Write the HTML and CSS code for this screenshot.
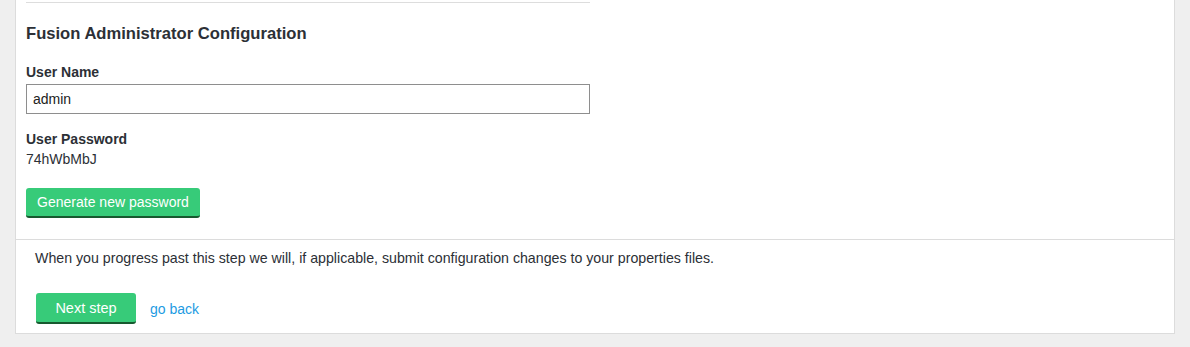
FILE: index.html
```html
<!DOCTYPE html>
<html>
<head>
<meta charset="utf-8">
<link rel="stylesheet" href="styles.css">
</head>
<body>
<div class="panel">
  <div class="section">
    <div class="rule"></div>
    <h3 class="title">Fusion Administrator Configuration</h3>
    <label class="label" for="user">User Name</label>
    <input id="user" class="input" type="text" value="admin">
    <div class="label label-pw">User Password</div>
    <div class="value">74hWbMbJ</div>
    <button class="btn btn-gen">Generate new password</button>
  </div>
  <div class="footer">
    <p class="note">When you progress past this step we will, if applicable, submit configuration changes to your properties files.</p>
    <div class="actions">
      <button class="btn btn-next">Next step</button>
      <a class="back" href="#">go back</a>
    </div>
  </div>
</div>
</body>
</html>
```

FILE: styles.css
```css
html, body {
  margin: 0;
  padding: 0;
  background: #efefef;
  font-family: "Liberation Sans", Arial, sans-serif;
  color: #2c3036;
}
.panel {
  margin-left: 15px;
  width: 1158px;
  background: #fff;
  border: 1px solid #dcdcdc;
  border-top: none;
}
.section {
  padding: 2px 10px 21px 10px;
  display: flex;
  flex-direction: column;
  align-items: flex-start;
}
.rule {
  width: 564px;
  height: 1px;
  background: #dddddd;
}
.title {
  margin: 21px 0 0 0;
  font-size: 16.6px;
  line-height: 20px;
  font-weight: bold;
  color: #2c3036;
}
.label {
  display: block;
  margin-top: 18px;
  font-size: 14px;
  line-height: 20px;
  font-weight: bold;
  color: #2c3036;
}
.label-pw {
  margin-top: 15px;
}
.input {
  margin-top: 2px;
  box-sizing: border-box;
  width: 564px;
  height: 30px;
  border: 1px solid #8e8e8e;
  padding: 0 6px;
  font-family: "Liberation Sans", Arial, sans-serif;
  font-size: 14px;
  color: #222;
  border-radius: 0;
  outline: none;
}
.value {
  margin-top: 0;
  font-size: 14px;
  line-height: 20px;
  color: #2c3036;
}
.btn {
  box-sizing: border-box;
  border: none;
  border-bottom: 2px solid #17592f;
  border-radius: 3px;
  background: #37cb79;
  color: #fff;
  font-family: "Liberation Sans", Arial, sans-serif;
  cursor: pointer;
  padding: 0;
}
.btn-gen {
  margin-top: 19px;
  width: 174px;
  height: 30px;
  font-size: 14px;
}
.footer {
  border-top: 1px solid #dcdcdc;
  padding: 8px 19px 9px 19px;
}
.note {
  margin: 0;
  font-size: 14.2px;
  line-height: 20px;
  color: #2c3036;
}
.actions {
  margin-top: 25px;
  display: flex;
  align-items: center;
  gap: 14px;
}
.btn-next {
  margin-left: 1px;
  width: 100px;
  height: 31px;
  font-size: 14.5px;
}
.back {
  color: #1d9be2;
  text-decoration: none;
  font-size: 14px;
}
```
